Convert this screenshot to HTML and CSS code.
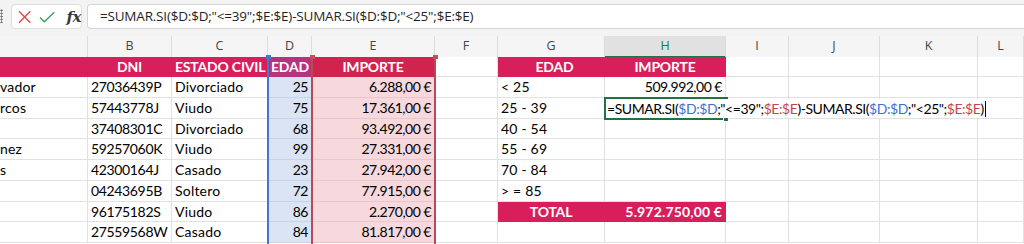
FILE: index.html
```html
<!DOCTYPE html>
<html lang="es">
<head>
<meta charset="utf-8">
<title>Excel SUMAR.SI</title>
<link rel="stylesheet" href="styles.css">
</head>
<body>
<div class="app">
  <div class="fbar">
    <span class="grip"></span>
    <div class="fbtns">
      <svg class="ic" width="14" height="14" viewBox="0 0 14 14"><path d="M1 1 L13 13 M13 1 L1 13" stroke="#e0484c" stroke-width="1.4" fill="none"/></svg>
      <svg class="ic" width="17" height="12" viewBox="0 0 17 12"><path d="M1 6.5 L5.5 11 L16 1" stroke="#3f9c5c" stroke-width="1.4" fill="none"/></svg>
      <span class="fx">fx</span>
    </div>
    <div class="formula">=SUMAR.SI($D:$D;"&lt;=39";$E:$E)-SUMAR.SI($D:$D;"&lt;25";$E:$E)</div>
  </div>

  <div class="colhdr">
    <div class="ch"></div>
    <div class="ch">B</div>
    <div class="ch">C</div>
    <div class="ch">D</div>
    <div class="ch">E</div>
    <div class="ch">F</div>
    <div class="ch">G</div>
    <div class="ch sel">H</div>
    <div class="ch">I</div>
    <div class="ch">J</div>
    <div class="ch">K</div>
    <div class="ch">L</div>
  </div>

  <div class="sheet">
    <!-- header row -->
    <div class="c h"></div>
    <div class="c h ctr">DNI</div>
    <div class="c h ctr">ESTADO CIVIL</div>
    <div class="c h hd ctr">EDAD</div>
    <div class="c h he ctr">IMPORTE</div>
    <div class="c"></div>
    <div class="c h ctr g">EDAD</div>
    <div class="c h ctr">IMPORTE</div>
    <div class="c"></div><div class="c"></div><div class="c"></div><div class="c"></div>

    <div class="c a">vador</div><div class="c id">27036439P</div><div class="c">Divorciado</div><div class="c d num">25</div><div class="c e num">6.288,00 €</div><div class="c"></div><div class="c">&lt; 25</div><div class="c num">509.992,00 €</div><div class="c"></div><div class="c"></div><div class="c"></div><div class="c"></div>

    <div class="c a">rcos</div><div class="c id">57443778J</div><div class="c">Viudo</div><div class="c d num">75</div><div class="c e num">17.361,00 €</div><div class="c"></div><div class="c">25 - 39</div><div class="c"></div><div class="c"></div><div class="c"></div><div class="c"></div><div class="c"></div>

    <div class="c a"></div><div class="c id">37408301C</div><div class="c">Divorciado</div><div class="c d num">68</div><div class="c e num">93.492,00 €</div><div class="c"></div><div class="c">40 - 54</div><div class="c"></div><div class="c"></div><div class="c"></div><div class="c"></div><div class="c"></div>

    <div class="c a">nez</div><div class="c id">59257060K</div><div class="c">Viudo</div><div class="c d num">99</div><div class="c e num">27.331,00 €</div><div class="c"></div><div class="c">55 - 69</div><div class="c"></div><div class="c"></div><div class="c"></div><div class="c"></div><div class="c"></div>

    <div class="c a">s</div><div class="c id">42300164J</div><div class="c">Casado</div><div class="c d num">23</div><div class="c e num">27.942,00 €</div><div class="c"></div><div class="c">70 - 84</div><div class="c"></div><div class="c"></div><div class="c"></div><div class="c"></div><div class="c"></div>

    <div class="c a"></div><div class="c id">04243695B</div><div class="c">Soltero</div><div class="c d num">72</div><div class="c e num">77.915,00 €</div><div class="c"></div><div class="c">&gt; = 85</div><div class="c"></div><div class="c"></div><div class="c"></div><div class="c"></div><div class="c"></div>

    <div class="c a"></div><div class="c id">96175182S</div><div class="c">Viudo</div><div class="c d num">86</div><div class="c e num">2.270,00 €</div><div class="c"></div><div class="c h ctr">TOTAL</div><div class="c h num">5.972.750,00 €</div><div class="c"></div><div class="c"></div><div class="c"></div><div class="c"></div>

    <div class="c a"></div><div class="c id">27559568W</div><div class="c">Casado</div><div class="c d num">84</div><div class="c e num">81.817,00 €</div><div class="c"></div><div class="c"></div><div class="c"></div><div class="c"></div><div class="c"></div><div class="c"></div><div class="c"></div>

    <!-- reference highlights -->
    <div class="rng rng-d"></div>
    <div class="rng rng-e"></div>
    <span class="hdl hdl-d1"></span>
    <span class="hdl hdl-e1"></span>
    <span class="hdl hdl-e2"></span>

    <!-- active cell in edit mode -->
    <div class="active"></div>
    <div class="edit">=SUMAR.SI(<span class="rb">$D:$D</span>;"&lt;=39";<span class="rr">$E:$E</span>)-SUMAR.SI(<span class="rb">$D:$D</span>;"&lt;25";<span class="rr">$E:$E</span>)<span class="caret"></span></div>
    <span class="fill"></span>
  </div>
</div>
</body>
</html>
```

FILE: styles.css
```css
* { box-sizing: border-box; }
html, body { margin: 0; padding: 0; }
body {
  width: 1024px;
  height: 244px;
  overflow: hidden;
  background: #ffffff;
  font-family: Lato, "Liberation Sans", sans-serif;
}
.app { width: 1024px; }

/* formula bar */
.fbar {
  height: 36px;
  background: #f3f3f3;
  display: flex;
  align-items: flex-start;
  padding-top: 4px;
}
.grip {
  width: 11px;
  height: 25px;
  background-image: radial-gradient(circle, #6a6a6a 0.9px, transparent 1.2px);
  background-size: 3px 3px;
  background-repeat: repeat-y;
  background-position: 0 8px;
  background-clip: content-box;
  padding: 5px 0 6px;
}
.fbtns {
  width: 71px;
  height: 25px;
  background: #ffffff;
  border: 1px solid #dedede;
  border-radius: 4px;
  display: flex;
  align-items: center;
  padding-left: 6px;
  gap: 8px;
}
.fx {
  font-family: "DejaVu Serif", "Liberation Serif", serif;
  font-style: italic;
  font-weight: bold;
  font-size: 15px;
  color: #3a3a3a;
  margin-left: 3px;
  letter-spacing: -0.5px;
}
.formula {
  flex: 1;
  margin-left: 5px;
  height: 25px;
  background: #ffffff;
  border: 1px solid #d6d6d6;
  border-right: none;
  border-radius: 4px 0 0 4px;
  padding-left: 12px;
  font-family: "Open Sans", "Noto Sans", sans-serif;
  font-size: 13.5px;
  letter-spacing: -0.2px;
  line-height: 23px;
  color: #1f1f1f;
  white-space: nowrap;
}

/* column headers */
.colhdr {
  display: grid;
  grid-template-columns: 88px 84px 96px 44px 123px 63px 107px 121px 63px 91px 98px 1fr;
  height: 21px;
  background: #f5f5f5;
}
.ch {
  border-right: 1px solid #dcdcdc;
  text-align: center;
  font-family: "Open Sans", "Noto Sans", sans-serif;
  font-size: 12.5px;
  line-height: 20px;
  color: #454545;
}
.ch.sel {
  background: #e1e1e1;
  color: #217346;
  border-bottom: 2px solid #217346;
}

/* sheet grid */
.sheet {
  position: relative;
  display: grid;
  grid-template-columns: 88px 84px 96px 44px 123px 63px 107px 121px 63px 91px 98px 1fr;
  grid-template-rows: 20px repeat(8, 20.75px);
}
.c {
  border-right: 1px solid #e1e1e1;
  border-bottom: 1px solid #e1e1e1;
  padding: 0 3px;
  font-size: 14px;
  letter-spacing: 0.2px;
  line-height: 20px;
  color: #000;
  white-space: nowrap;
  overflow: hidden;
}
.c.a { padding-left: 0; }
.id { letter-spacing: -0.35px; }
.num { text-align: right; letter-spacing: -0.5px; }
.ctr { text-align: center; }
.h {
  background: #d81f5c;
  border-color: #d81f5c;
  color: #ffffff;
  font-weight: bold;
  letter-spacing: -0.2px;
}
.h.num { letter-spacing: 0.15px; }
.h.hd { background: #b9337c; border-color: #b9337c; }
.h.he { background: #d2234f; border-color: #d2234f; }
.h.g { padding-left: 10px; }
.d { background: #dbe4f4; border-bottom-color: #c8d3e6; }
.e { background: #f7d8dc; border-bottom-color: #e9c6ca; border-right-color: #e9c6ca; }

/* range highlights */
.rng {
  position: absolute;
  top: 0;
  bottom: -4px;
  border-width: 0 2px;
  border-style: solid;
  pointer-events: none;
}
.rng-d { left: 267px; width: 46px; border-color: #4a76c6; }
.rng-e { left: 311px; width: 125px; border-color: #b94a55; }
.hdl {
  position: absolute;
  top: -2px;
  width: 5px;
  height: 4px;
}
.hdl-d1 { left: 266px; background: #4a76c6; }
.hdl-e1 { left: 310px; background: #c0505a; }
.hdl-e2 { left: 433px; background: #c0505a; }

/* active cell */
.active {
  position: absolute;
  left: 604px;
  top: 40px;
  width: 124px;
  height: 23px;
  border: 2px solid #217346;
}
.edit {
  position: absolute;
  left: 606px;
  top: 42px;
  height: 19px;
  background: #ffffff;
  padding: 0 3px 0 1px;
  font-size: 14px;
  letter-spacing: -0.45px;
  line-height: 19px;
  color: #000;
  white-space: nowrap;
}
.rb { color: #3f6fd0; }
.rr { color: #c2464e; }
.caret {
  display: inline-block;
  width: 1px;
  height: 16px;
  background: #000;
  vertical-align: -3px;
  margin-left: 1px;
}
.fill {
  position: absolute;
  left: 723px;
  top: 60px;
  width: 6px;
  height: 5px;
  background: #217346;
  border: 1px solid #fff;
}
```
